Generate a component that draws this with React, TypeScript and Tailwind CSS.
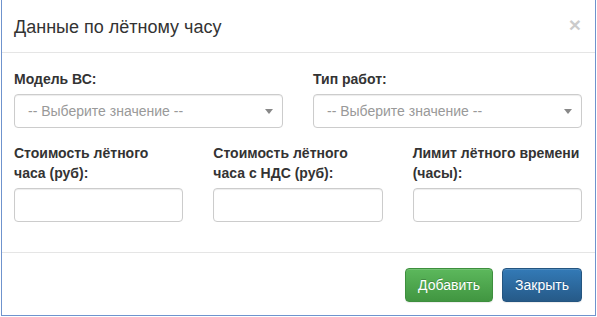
const fieldClass =
  'h-[34px] w-full rounded-[4px] border border-[#cccccc] bg-white shadow-[inset_0_1px_1px_rgba(0,0,0,0.075)]';

const SelectBox = () => (
  <div className={`${fieldClass} flex items-center justify-between pl-[13px] pr-[8px]`}>
    <span className="text-[14px] text-[#999999]">-- Выберите значение --</span>
    <svg width="8" height="5" viewBox="0 0 8 5" className="mr-[1px]">
      <path d="M0 0 L8 0 L4 5 Z" fill="#888888" />
    </svg>
  </div>
);

const Label = ({ children }: { children: React.ReactNode }) => (
  <label className="mb-[5px] block text-[14px] font-bold leading-[20px] text-[#333333]">
    {children}
  </label>
);

export default function App() {
  return (
    <div className="h-[317px] w-[597px] bg-white font-['Liberation_Sans',Arial,sans-serif] text-[#333333]">
      <div className="ml-px h-[316px] w-[595px] border-x border-b border-[#6f93cd] bg-white">
        {/* Header */}
        <div className="flex h-[53px] items-center justify-between border-b border-[#e5e5e5] pl-[12px] pr-[14px]">
          <h4 className="pt-[1px] text-[18px] leading-[26px] text-[#333333]">Данные по лётному часу</h4>
          <span className="mb-[3px] text-[21px] font-bold leading-none text-black opacity-20">×</span>
        </div>

        {/* Body */}
        <div className="w-[580px] pl-[12px] pt-[16px]">
          <div className="grid grid-cols-2 gap-x-[30px]">
            <div>
              <Label>Модель ВС:</Label>
              <SelectBox />
            </div>
            <div>
              <Label>Тип работ:</Label>
              <SelectBox />
            </div>
          </div>

          <div className="mt-[15px] grid grid-cols-3 gap-x-[30px]">
            <div>
              <Label>
                Стоимость лётного
                <br />
                часа (руб):
              </Label>
              <div className={fieldClass} />
            </div>
            <div>
              <Label>
                Стоимость лётного
                <br />
                часа с НДС (руб):
              </Label>
              <div className={fieldClass} />
            </div>
            <div>
              <Label>
                Лимит лётного времени
                <br />
                (часы):
              </Label>
              <div className={fieldClass} />
            </div>
          </div>
        </div>

        {/* Footer */}
        <div className="mt-[30px] flex justify-end gap-[9px] border-t border-[#e5e5e5] pr-[13px] pt-[15px]">
          <button className="h-[34px] w-[88px] rounded-[4px] border border-[#3e8f3e] bg-gradient-to-b from-[#5cb85c] to-[#419641] text-[14px] text-white shadow-[inset_0_1px_0_rgba(255,255,255,0.15),0_1px_1px_rgba(0,0,0,0.075)] [text-shadow:0_-1px_0_rgba(0,0,0,0.2)]">
            Добавить
          </button>
          <button className="h-[34px] w-[80px] rounded-[4px] border border-[#245580] bg-gradient-to-b from-[#337ab7] to-[#265a88] text-[14px] text-white shadow-[inset_0_1px_0_rgba(255,255,255,0.15),0_1px_1px_rgba(0,0,0,0.075)] [text-shadow:0_-1px_0_rgba(0,0,0,0.2)]">
            Закрыть
          </button>
        </div>
      </div>
    </div>
  );
}
